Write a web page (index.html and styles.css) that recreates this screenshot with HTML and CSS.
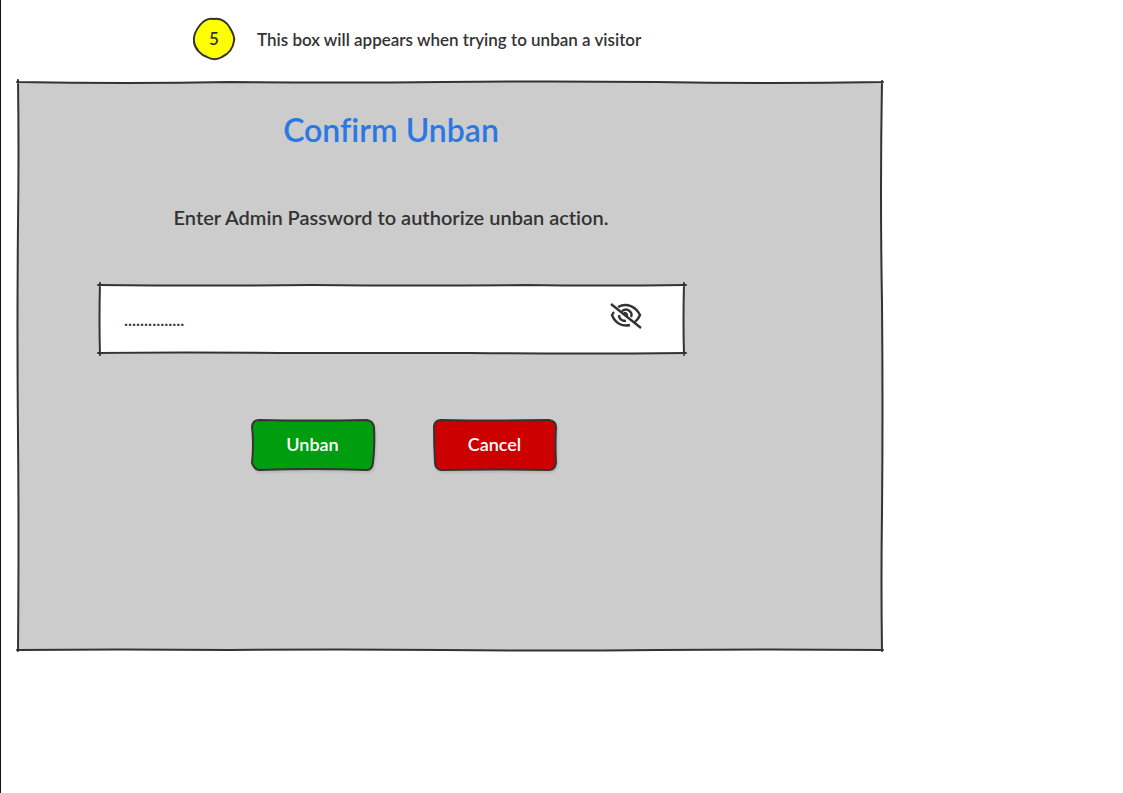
FILE: index.html
```html
<!DOCTYPE html>
<html lang="en">
<head>
<meta charset="utf-8">
<meta name="viewport" content="width=device-width, initial-scale=1">
<title>Confirm Unban</title>
<link rel="stylesheet" href="styles.css">
</head>
<body>
<main class="page">
  <header class="note">
    <span class="badge">
      <svg class="sketch" viewBox="0 0 42 42" preserveAspectRatio="none" aria-hidden="true"><path fill="#ffff00" d="M21 1C28 0 34 4 37 10C40 15 42 19 41 23C40 31 35 36 29 39C24 42 19 42 14 39C8 37 2 31 1 24C0 17 3 12 7 7C11 2 16 0 21 1Z"/></svg>
      <span class="badge-number">5</span>
    </span>
    <p class="note-text">This box will appears when trying to unban a visitor</p>
  </header>

  <section class="panel" aria-labelledby="title">
    <svg class="sketch" viewBox="0 0 864 568" preserveAspectRatio="none" aria-hidden="true"><path fill="#cccccc" stroke="none" d="M0 0H864V568H0Z"/><path d="M-1 0Q110 2 212 0Q320 1 425 0Q530 -1 638 0Q750 2 865 0M864 -1Q862 110 864 220Q865 330 864 430Q863 500 864 569M865 568Q750 567 640 568Q530 569 425 568Q320 567 212 568Q100 567 -1 568M0 569Q1 450 0 355Q-1 250 0 142Q1 70 0 -2"/></svg>
    <h1 class="title" id="title">Confirm Unban</h1>
    <form class="form">
      <label class="prompt" for="password">Enter Admin Password to authorize unban action.</label>
      <div class="field">
        <svg class="sketch" viewBox="0 0 584 68" preserveAspectRatio="none" aria-hidden="true"><path fill="#ffffff" stroke="none" d="M0 0H584V68H0Z"/><path d="M-2 0Q110 1 212 0Q320 1 425 0Q500 1 586 0M584 -2Q583 35 584 70M586 68Q480 69 370 68Q280 68 180 68Q80 67 -2 68M0 70Q-1 35 0 -2"/></svg>
        <input class="input" id="password" type="text" value="..............." autocomplete="off">
        <button class="toggle" type="button" aria-label="Show password">
          <svg class="eye" viewBox="0 0 32 26" aria-hidden="true"><path d="M8 4C17 -1 26 4 30 12C29 15 27 17 25 19M4 9C3 10 3 11 2 12C5 20 12 24 20 22M12 8C18 4 23 10 21 14M9 12C9 16 12 18 16 18M14 10C16 10 17 11 17 13M1 1L31 25"/></svg>
        </button>
      </div>
      <div class="actions">
        <button class="button" type="submit">
          <svg class="sketch shadow" viewBox="0 0 122 49" preserveAspectRatio="none" aria-hidden="true"><path fill="#009e0f" d="M7 0Q60 1 115 0Q121 1 122 7Q123 26 121 42Q120 49 115 49Q60 47 7 49Q2 48 0 42Q2 24 0 6Q1 0 7 0Z"/></svg>
          <span class="button-label">Unban</span>
        </button>
        <button class="button" type="button">
          <svg class="sketch shadow" viewBox="0 0 122 49" preserveAspectRatio="none" aria-hidden="true"><path fill="#cc0000" d="M7 0Q60 1 115 0Q122 1 122 7Q121 26 122 42Q121 49 115 49Q60 48 7 49Q1 48 1 42Q0 24 0 6Q1 0 7 0Z"/></svg>
          <span class="button-label">Cancel</span>
        </button>
      </div>
    </form>
  </section>
</main>
</body>
</html>
```
FILE: styles.css
```css
* {
  box-sizing: border-box;
}

body {
  margin: 0;
  background: #ffffff;
  color: #333333;
  font-family: Lato, "Open Sans", sans-serif;
  font-weight: 600;
  font-variant-ligatures: none;
}

.page {
  min-height: 100vh;
  padding: 18px 16px 32px 17px;
  border-left: 1px solid #111111;
}

.note {
  display: flex;
  align-items: center;
  gap: 22px;
  padding-left: 175px;
}

.badge {
  position: relative;
  display: grid;
  place-items: center;
  flex: none;
  width: 42px;
  height: 42px;
  padding-bottom: 2px;
  font-size: 17px;
}

.note-text {
  margin: 0;
  padding-top: 2px;
  font-size: 17px;
  line-height: 24px;
}

.sketch {
  position: absolute;
  inset: 0;
  width: 100%;
  height: 100%;
  overflow: visible;
  fill: none;
  stroke: #333333;
  stroke-width: 2;
  stroke-linejoin: round;
  stroke-linecap: round;
}

.sketch path {
  vector-effect: non-scaling-stroke;
}

.shadow {
  filter: drop-shadow(1px 2px 1px rgba(0, 0, 0, 0.1));
}

.badge-number,
.button-label {
  position: relative;
}

.panel {
  position: relative;
  max-width: 864px;
  margin-top: 22px;
  padding: 28px 200px 180px 82px;
}

.title {
  position: relative;
  margin: 0;
  color: #2b78e4;
  font-size: 32px;
  font-weight: 600;
  line-height: 40px;
  text-align: center;
}

.form {
  position: relative;
  display: flex;
  flex-direction: column;
  margin-top: 55px;
}

.prompt {
  font-size: 20px;
  line-height: 24px;
  text-align: center;
}

.field {
  position: relative;
  display: flex;
  align-items: center;
  height: 68px;
  margin-top: 56px;
  margin-right: -2px;
  padding: 0 42px 0 24px;
}

.input {
  position: relative;
  flex: 1;
  min-width: 0;
  padding: 0;
  border: 0;
  outline: 0;
  background: transparent;
  color: #333333;
  font: inherit;
  font-size: 17px;
}

.toggle {
  position: relative;
  padding: 0 0 6px;
  border: 0;
  background: transparent;
  cursor: pointer;
}

.eye {
  display: block;
  width: 32px;
  height: 26px;
  overflow: visible;
  fill: none;
  stroke: #333333;
  stroke-width: 2.4;
}

.actions {
  display: flex;
  justify-content: center;
  gap: 60px;
  margin-top: 67px;
  padding-left: 25px;
}

.button {
  position: relative;
  width: 122px;
  height: 50px;
  padding: 0 0 2px;
  border: 0;
  background: transparent;
  color: #ffffff;
  font: inherit;
  font-size: 18px;
  cursor: pointer;
}
```
